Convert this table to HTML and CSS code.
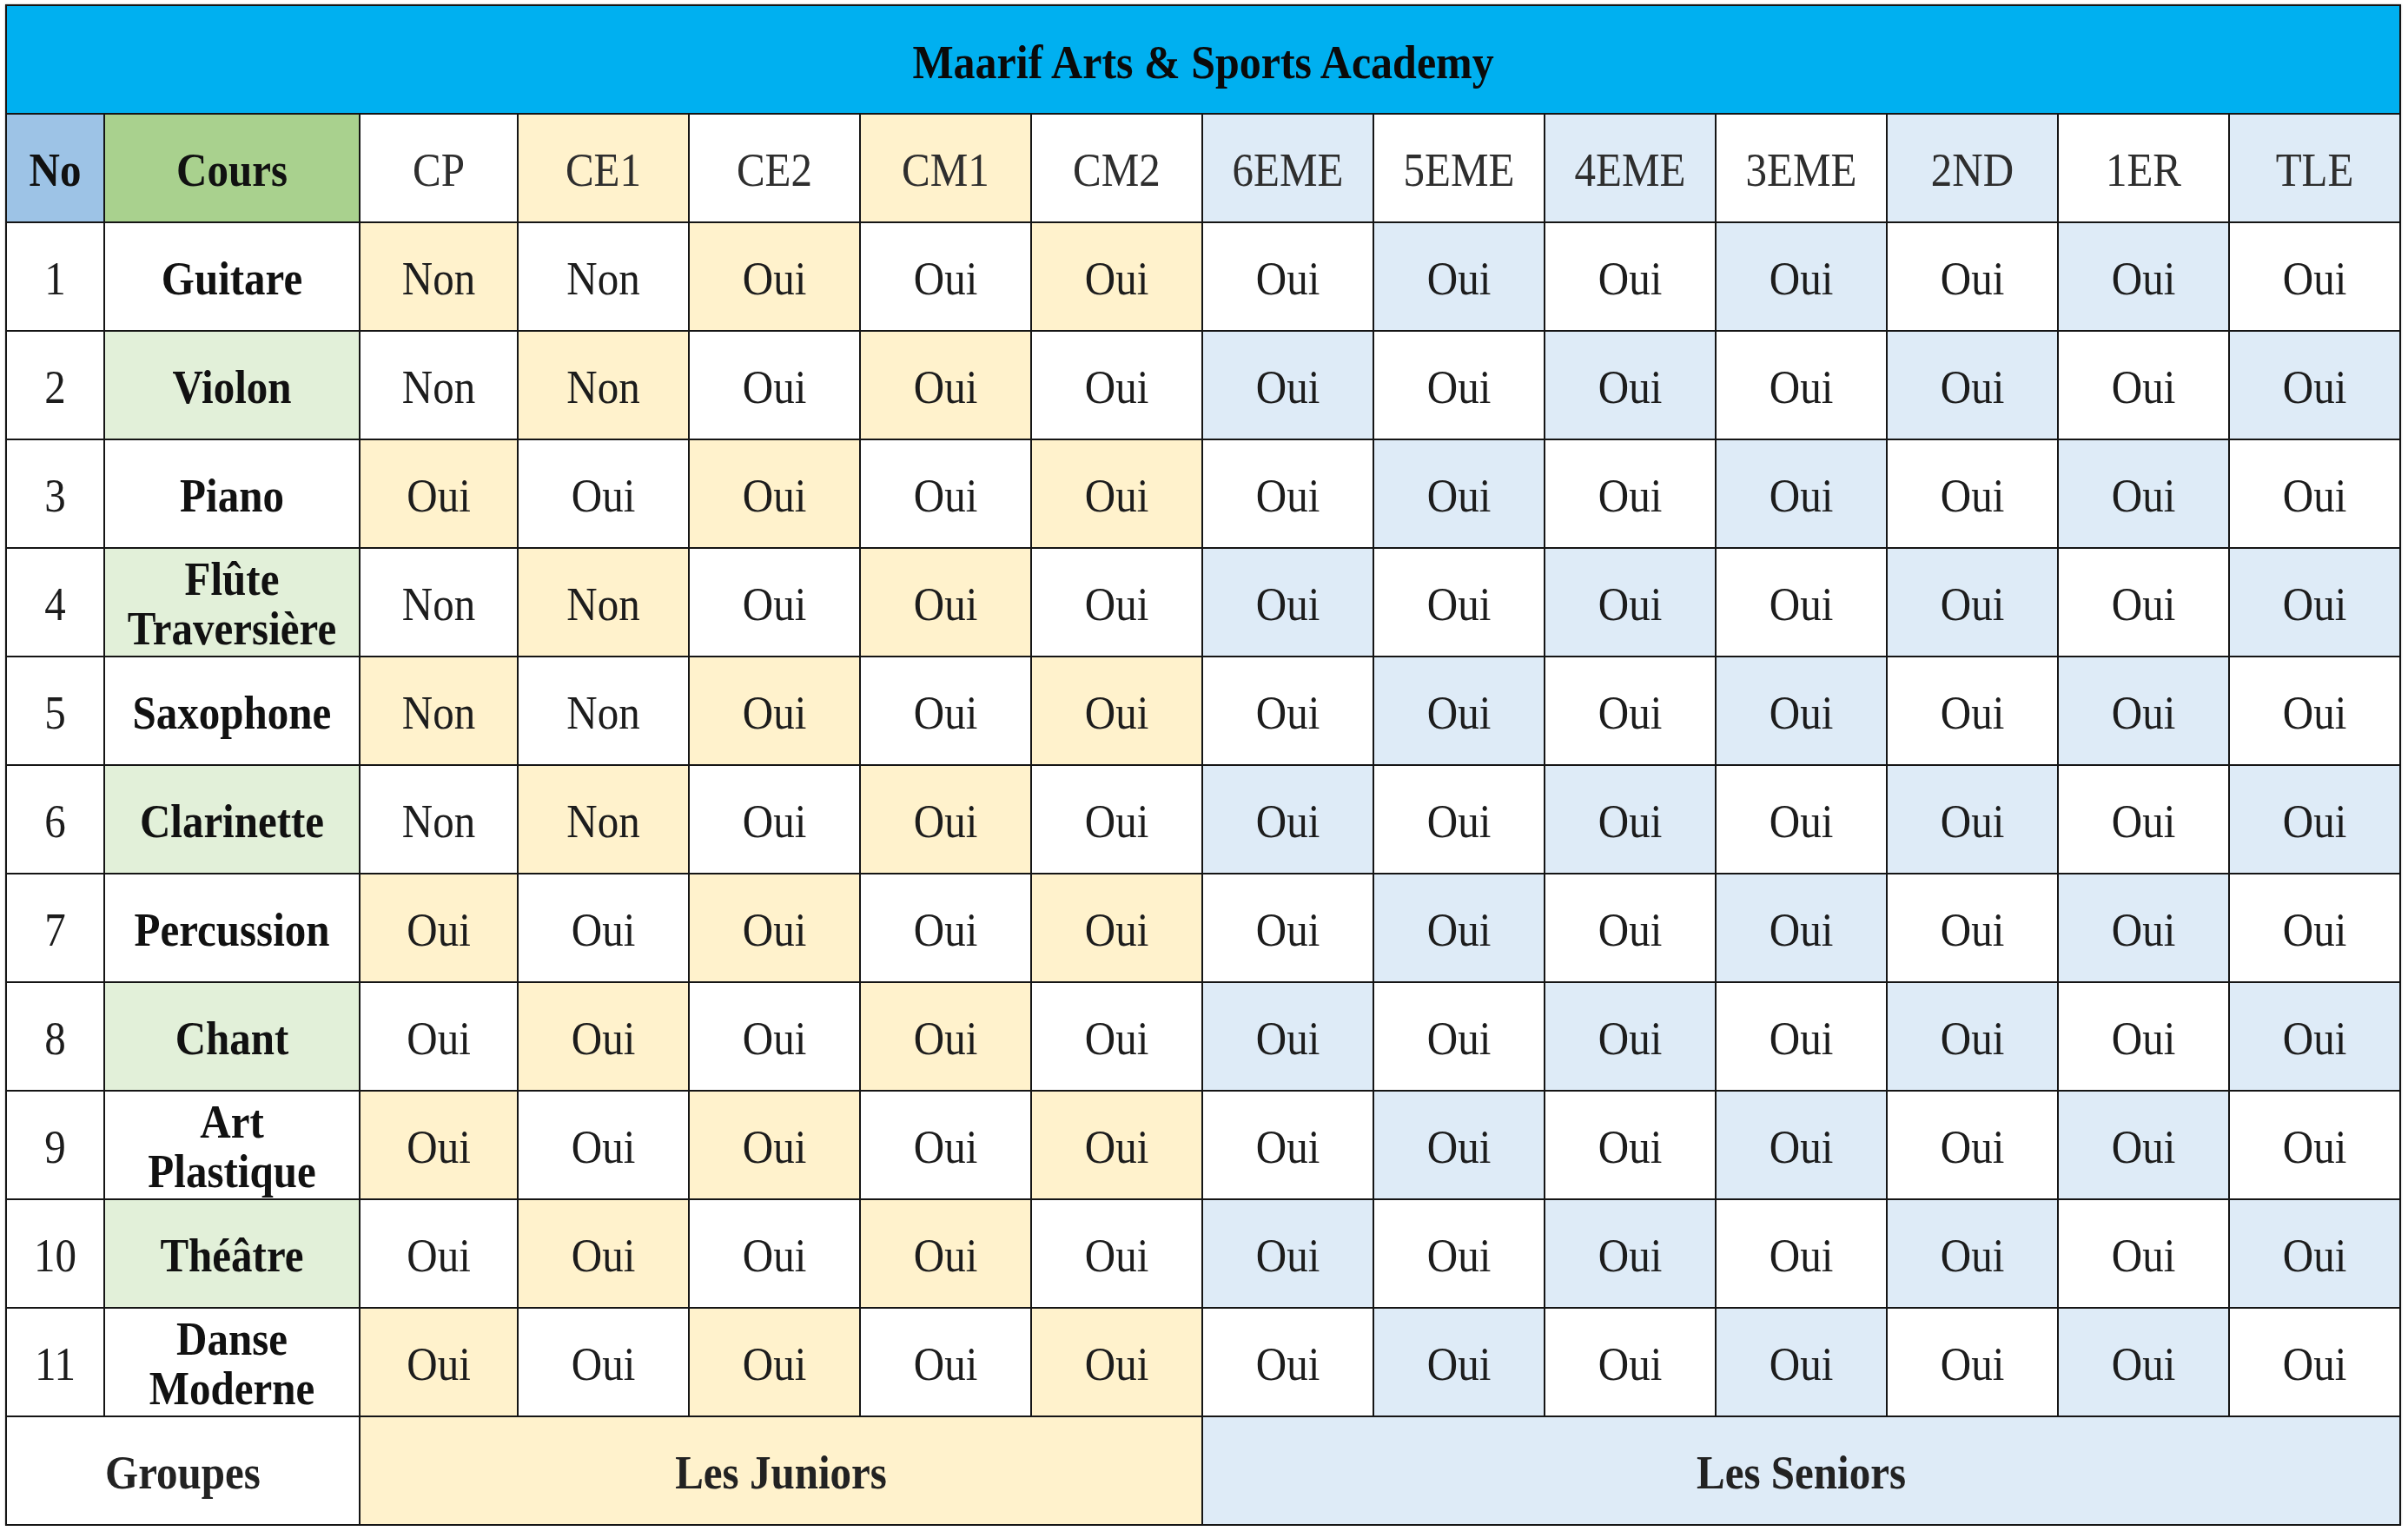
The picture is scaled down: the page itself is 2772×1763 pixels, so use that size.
FILE: index.html
```html
<!DOCTYPE html>
<html lang="fr">
<head>
<meta charset="utf-8">
<title>Maarif Arts &amp; Sports Academy</title>
<link rel="stylesheet" href="styles.css">
</head>
<body>
<table class="grid">
  <colgroup>
    <col class="c-no"><col class="c-cours"><col class="c-cp">
    <col class="c-g"><col class="c-g"><col class="c-g"><col class="c-g"><col class="c-g"><col class="c-g"><col class="c-g"><col class="c-g"><col class="c-g"><col class="c-g"><col class="c-g">
  </colgroup>
  <thead>
    <tr class="title-row"><th colspan="14" class="title"><span>Maarif Arts &amp; Sports Academy</span></th></tr>
    <tr class="head-row">
      <th class="h-no"><span>No</span></th>
      <th class="h-cours"><span>Cours</span></th>
      <th class="hg"><span>CP</span></th>
      <th class="hg y"><span>CE1</span></th>
      <th class="hg"><span>CE2</span></th>
      <th class="hg y"><span>CM1</span></th>
      <th class="hg"><span>CM2</span></th>
      <th class="hg b"><span>6EME</span></th>
      <th class="hg"><span>5EME</span></th>
      <th class="hg b"><span>4EME</span></th>
      <th class="hg"><span>3EME</span></th>
      <th class="hg b"><span>2ND</span></th>
      <th class="hg"><span>1ER</span></th>
      <th class="hg b"><span>TLE</span></th>
    </tr>
  </thead>
  <tbody>
    <tr>
      <td><span>1</span></td><td class="name"><span>Guitare</span></td>
      <td class="y"><span>Non</span></td><td><span>Non</span></td><td class="y"><span>Oui</span></td><td><span>Oui</span></td><td class="y"><span>Oui</span></td>
      <td><span>Oui</span></td><td class="b"><span>Oui</span></td><td><span>Oui</span></td><td class="b"><span>Oui</span></td><td><span>Oui</span></td><td class="b"><span>Oui</span></td><td><span>Oui</span></td>
    </tr>
    <tr>
      <td><span>2</span></td><td class="name g"><span>Violon</span></td>
      <td><span>Non</span></td><td class="y"><span>Non</span></td><td><span>Oui</span></td><td class="y"><span>Oui</span></td><td><span>Oui</span></td>
      <td class="b"><span>Oui</span></td><td><span>Oui</span></td><td class="b"><span>Oui</span></td><td><span>Oui</span></td><td class="b"><span>Oui</span></td><td><span>Oui</span></td><td class="b"><span>Oui</span></td>
    </tr>
    <tr>
      <td><span>3</span></td><td class="name"><span>Piano</span></td>
      <td class="y"><span>Oui</span></td><td><span>Oui</span></td><td class="y"><span>Oui</span></td><td><span>Oui</span></td><td class="y"><span>Oui</span></td>
      <td><span>Oui</span></td><td class="b"><span>Oui</span></td><td><span>Oui</span></td><td class="b"><span>Oui</span></td><td><span>Oui</span></td><td class="b"><span>Oui</span></td><td><span>Oui</span></td>
    </tr>
    <tr>
      <td><span>4</span></td><td class="name g"><span>Flûte Traversière</span></td>
      <td><span>Non</span></td><td class="y"><span>Non</span></td><td><span>Oui</span></td><td class="y"><span>Oui</span></td><td><span>Oui</span></td>
      <td class="b"><span>Oui</span></td><td><span>Oui</span></td><td class="b"><span>Oui</span></td><td><span>Oui</span></td><td class="b"><span>Oui</span></td><td><span>Oui</span></td><td class="b"><span>Oui</span></td>
    </tr>
    <tr>
      <td><span>5</span></td><td class="name"><span>Saxophone</span></td>
      <td class="y"><span>Non</span></td><td><span>Non</span></td><td class="y"><span>Oui</span></td><td><span>Oui</span></td><td class="y"><span>Oui</span></td>
      <td><span>Oui</span></td><td class="b"><span>Oui</span></td><td><span>Oui</span></td><td class="b"><span>Oui</span></td><td><span>Oui</span></td><td class="b"><span>Oui</span></td><td><span>Oui</span></td>
    </tr>
    <tr>
      <td><span>6</span></td><td class="name g"><span>Clarinette</span></td>
      <td><span>Non</span></td><td class="y"><span>Non</span></td><td><span>Oui</span></td><td class="y"><span>Oui</span></td><td><span>Oui</span></td>
      <td class="b"><span>Oui</span></td><td><span>Oui</span></td><td class="b"><span>Oui</span></td><td><span>Oui</span></td><td class="b"><span>Oui</span></td><td><span>Oui</span></td><td class="b"><span>Oui</span></td>
    </tr>
    <tr>
      <td><span>7</span></td><td class="name"><span>Percussion</span></td>
      <td class="y"><span>Oui</span></td><td><span>Oui</span></td><td class="y"><span>Oui</span></td><td><span>Oui</span></td><td class="y"><span>Oui</span></td>
      <td><span>Oui</span></td><td class="b"><span>Oui</span></td><td><span>Oui</span></td><td class="b"><span>Oui</span></td><td><span>Oui</span></td><td class="b"><span>Oui</span></td><td><span>Oui</span></td>
    </tr>
    <tr>
      <td><span>8</span></td><td class="name g"><span>Chant</span></td>
      <td><span>Oui</span></td><td class="y"><span>Oui</span></td><td><span>Oui</span></td><td class="y"><span>Oui</span></td><td><span>Oui</span></td>
      <td class="b"><span>Oui</span></td><td><span>Oui</span></td><td class="b"><span>Oui</span></td><td><span>Oui</span></td><td class="b"><span>Oui</span></td><td><span>Oui</span></td><td class="b"><span>Oui</span></td>
    </tr>
    <tr>
      <td><span>9</span></td><td class="name"><span>Art Plastique</span></td>
      <td class="y"><span>Oui</span></td><td><span>Oui</span></td><td class="y"><span>Oui</span></td><td><span>Oui</span></td><td class="y"><span>Oui</span></td>
      <td><span>Oui</span></td><td class="b"><span>Oui</span></td><td><span>Oui</span></td><td class="b"><span>Oui</span></td><td><span>Oui</span></td><td class="b"><span>Oui</span></td><td><span>Oui</span></td>
    </tr>
    <tr>
      <td><span>10</span></td><td class="name g"><span>Théâtre</span></td>
      <td><span>Oui</span></td><td class="y"><span>Oui</span></td><td><span>Oui</span></td><td class="y"><span>Oui</span></td><td><span>Oui</span></td>
      <td class="b"><span>Oui</span></td><td><span>Oui</span></td><td class="b"><span>Oui</span></td><td><span>Oui</span></td><td class="b"><span>Oui</span></td><td><span>Oui</span></td><td class="b"><span>Oui</span></td>
    </tr>
    <tr>
      <td><span>11</span></td><td class="name"><span>Danse Moderne</span></td>
      <td class="y"><span>Oui</span></td><td><span>Oui</span></td><td class="y"><span>Oui</span></td><td><span>Oui</span></td><td class="y"><span>Oui</span></td>
      <td><span>Oui</span></td><td class="b"><span>Oui</span></td><td><span>Oui</span></td><td class="b"><span>Oui</span></td><td><span>Oui</span></td><td class="b"><span>Oui</span></td><td><span>Oui</span></td>
    </tr>
  </tbody>
  <tfoot>
    <tr class="foot-row">
      <td colspan="2" class="foot"><span>Groupes</span></td>
      <td colspan="5" class="foot y"><span>Les Juniors</span></td>
      <td colspan="7" class="foot b"><span>Les Seniors</span></td>
    </tr>
  </tfoot>
</table>
</body>
</html>
```

FILE: styles.css
```css
html, body {
  margin: 0;
  padding: 0;
  background: #ffffff;
}

body {
  padding: 5px 0 0 6px;
  font-family: "Liberation Serif", "Times New Roman", serif;
  color: #111111;
}

.grid {
  border-collapse: collapse;
  table-layout: fixed;
  width: 2756px;
  box-shadow: 0 0 2px rgba(0, 0, 0, 0.35);
}

.c-no { width: 113px; }
.c-cours { width: 294px; }
.c-cp { width: 182px; }
.c-g { width: 197px; }

.grid th,
.grid td {
  border: 2px solid #151515;
  height: 118px;
  padding: 5px 12px 0;
  text-align: center;
  vertical-align: middle;
  font-size: 49px;
  font-weight: normal;
  line-height: 52px;
  background: #ffffff;
  color: #1c1c1c;
}

.grid span {
  display: inline-block;
  transform: scaleY(1.1);
}

.grid .title {
  background: #00b0f0;
  font-weight: bold;
  font-size: 50px;
  color: #0a0a0a;
}

.grid .h-no {
  background: #9dc3e6;
  font-weight: bold;
  padding: 5px 4px 0;
  color: #111111;
}

.grid .h-cours {
  background: #a9d18e;
  font-weight: bold;
  color: #111111;
}

.grid .hg {
  color: #2e2e2e;
}

.grid .name {
  font-weight: bold;
  color: #111111;
}

.grid .foot {
  font-weight: bold;
  color: #222222;
}

.grid .y { background: #fff2cc; }
.grid .b { background: #deebf7; }
.grid .g { background: #e2f0d9; }
```
